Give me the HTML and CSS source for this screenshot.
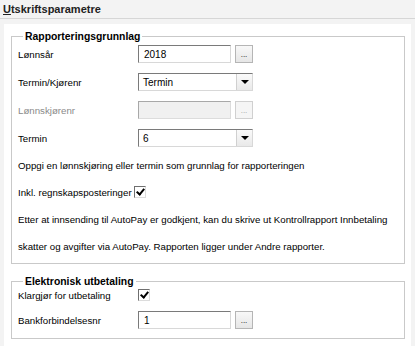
FILE: index.html
```html
<!DOCTYPE html>
<html lang="no">
<head>
    <meta charset="UTF-8">
    <title>Utskriftsparametre</title>
    <link rel="stylesheet" href="styles.css">
</head>
<body>
    <div class="header"><span class="title"><u>U</u>tskriftsparametre</span></div>

    <div class="panel">
        <fieldset class="group">
            <legend>Rapporteringsgrunnlag</legend>

            <div class="row">
                <label>Lønnsår</label>
                <div class="field">
                    <span class="textbox">2018</span>
                    <span class="dots">...</span>
                </div>
            </div>

            <div class="row">
                <label>Termin/Kjørenr</label>
                <div class="field">
                    <span class="combo"><span class="value">Termin</span><span class="arrow"></span></span>
                </div>
            </div>

            <div class="row disabled">
                <label>Lønnskjørenr</label>
                <div class="field">
                    <span class="textbox"></span>
                    <span class="dots">...</span>
                </div>
            </div>

            <div class="row">
                <label>Termin</label>
                <div class="field">
                    <span class="combo"><span class="value">6</span><span class="arrow"></span></span>
                </div>
            </div>

            <p class="line">Oppgi en lønnskjøring eller termin som grunnlag for rapporteringen</p>
            <p class="line">Inkl. regnskapsposteringer <span class="check"></span></p>
            <p class="line">Etter at innsending til AutoPay er godkjent, kan du skrive ut Kontrollrapport Innbetaling</p>
            <p class="line">skatter og avgifter via AutoPay. Rapporten ligger under Andre rapporter.</p>
        </fieldset>

        <fieldset class="group second">
            <legend>Elektronisk utbetaling</legend>

            <div class="row short">
                <label>Klargjør for utbetaling</label>
                <div class="field"><span class="check"></span></div>
            </div>

            <div class="row">
                <label>Bankforbindelsesnr</label>
                <div class="field">
                    <span class="textbox">1</span>
                    <span class="dots">...</span>
                </div>
            </div>
        </fieldset>
    </div>
</body>
</html>
```

FILE: styles.css
```css
body {
    margin: 0;
    background-color: #f3f3f3;
    font-family: "Liberation Sans", Arial, sans-serif;
    font-size: 9.7px;
    color: #000;
}

.header {
    height: 18px;
    border-bottom: 1px solid #d6d6d6;
    margin-bottom: 5px;
}

.title {
    display: inline-block;
    padding: 3px 0 0 3px;
    font-size: 11px;
    font-weight: bold;
    color: #222;
}

.panel {
    box-sizing: border-box;
    background-color: #fff;
    margin: 0 4px;
    padding: 7px 6px 6px 7px;
    min-height: calc(100vh - 24px);
}

.group {
    margin: 0;
    padding: 0 0 3px 6px;
    border: 1px solid #c9c9c9;
}

.group legend {
    padding: 0 2px;
    margin-left: 5px;
    font-size: 10.4px;
    font-weight: bold;
}

.second {
    margin-top: 12px;
    padding-bottom: 3px;
}

.row {
    display: flex;
    align-items: center;
    height: 28px;
}

.row:first-of-type {
    margin-top: -2px;
}

.row label {
    width: 120px;
}

.row.short {
    height: 20px;
    margin-top: -2px;
}

.second .row:last-child {
    height: 30px;
}

.field {
    display: flex;
    align-items: center;
}

.textbox {
    box-sizing: border-box;
    width: 93px;
    height: 18px;
    padding: 3px 5px;
    border: 1px solid;
    border-color: #7a7a7a #d8d8d8 #d8d8d8 #7a7a7a;
    background-color: #fff;
    font-size: 10px;
}

.dots {
    box-sizing: border-box;
    width: 18px;
    height: 18px;
    margin-left: 4px;
    border: 1px solid #b5b5b5;
    background: linear-gradient(#f8f8f8, #e6e6e6);
    font-size: 8px;
    text-align: center;
    line-height: 18px;
}

.combo {
    box-sizing: border-box;
    display: flex;
    width: 115px;
    height: 18px;
    border: 1px solid;
    border-color: #7a7a7a #d8d8d8 #d8d8d8 #7a7a7a;
    background-color: #fff;
}

.combo .value {
    flex: 1;
    padding: 3px 4px;
    font-size: 10px;
}

.combo .arrow {
    position: relative;
    width: 15px;
    border-left: 1px solid #d0d0d0;
    background: linear-gradient(#fafafa, #e9e9e9);
}

.combo .arrow::after {
    content: "";
    position: absolute;
    left: 4px;
    top: 6px;
    border-left: 4px solid transparent;
    border-right: 4px solid transparent;
    border-top: 4px solid #000;
}

.disabled label {
    color: #8a8a8a;
}

.disabled .textbox {
    background-color: #f0f0f0;
    border-color: #a8a8a8 #dcdcdc #dcdcdc #a8a8a8;
}

.disabled .dots {
    color: #a0a0a0;
    border-color: #d0d0d0;
    background: #f5f5f5;
}

.line {
    margin: 0;
    height: 27px;
    line-height: 27px;
}

.check {
    display: inline-block;
    position: relative;
    box-sizing: border-box;
    width: 12px;
    height: 12px;
    border: 1px solid;
    border-color: #6f6f6f #dcdcdc #dcdcdc #6f6f6f;
    background-color: #fff;
    vertical-align: -2px;
}

.check::after {
    content: "";
    position: absolute;
    left: 3px;
    top: 0;
    width: 3px;
    height: 6px;
    border: solid #000;
    border-width: 0 2px 2px 0;
    transform: rotate(40deg);
}
```
